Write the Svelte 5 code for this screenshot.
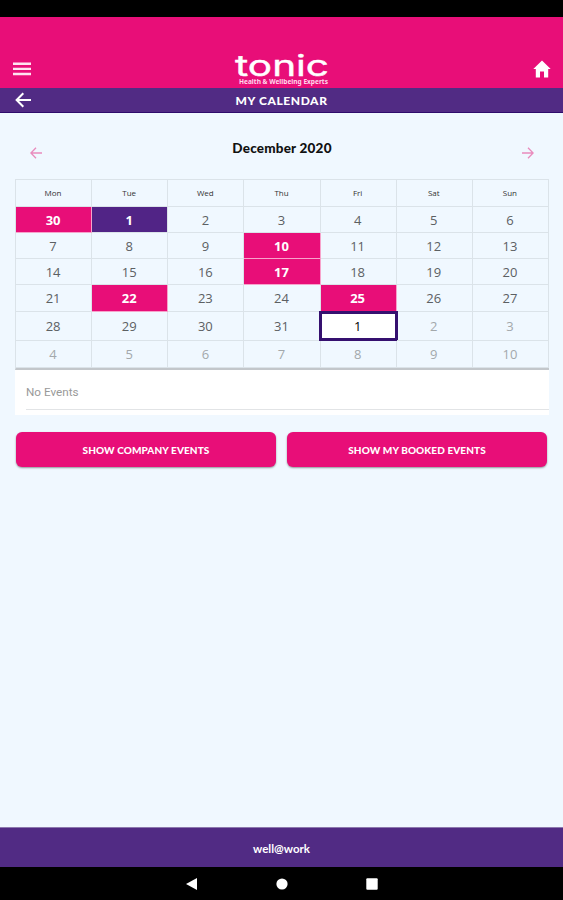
<script lang="ts">
  interface Day {
    label: number;
    type?: 'booked' | 'today' | 'selected' | 'outside';
  }

  const weekdays = ['Mon', 'Tue', 'Wed', 'Thu', 'Fri', 'Sat', 'Sun'];
  const booked = [10, 17, 22, 25];

  function buildDays(): Day[] {
    const days: Day[] = [{ label: 30, type: 'booked' }];
    for (let i = 1; i <= 31; i++) {
      days.push({ label: i, type: i === 1 ? 'today' : booked.includes(i) ? 'booked' : undefined });
    }
    for (let i = 1; i <= 10; i++) {
      days.push({ label: i, type: i === 1 ? 'selected' : 'outside' });
    }
    return days;
  }

  const days = buildDays();
</script>

<div class="app">
  <div class="status-bar"></div>

  <header>
    <button class="icon-btn menu" aria-label="Menu">
      <svg width="18" height="14" viewBox="0 0 18 14"><path d="M0 1.8h18M0 6.9h18M0 12h18" stroke="#ffe3f1" stroke-width="2.4" /></svg>
    </button>
    <svg class="logo" width="96" height="38" viewBox="0 0 96 38">
      <text class="word" x="1" y="26.5" textLength="94" lengthAdjust="spacingAndGlyphs">tonic</text>
      <text class="tagline" x="5" y="34.5" textLength="89" lengthAdjust="spacingAndGlyphs">Health &amp; Wellbeing Experts</text>
    </svg>
    <button class="icon-btn home" aria-label="Home">
      <svg width="18" height="18" viewBox="0 0 18 18"><path d="M9 0.5 0.3 9H2.8v8.5h4.2v-6h4v6h4.2V9h2.5z" fill="#fff" /></svg>
    </button>
  </header>

  <div class="title-bar">
    <button class="icon-btn back" aria-label="Back">
      <svg width="17" height="16" viewBox="0 0 17 16"><path d="M16 8H2M8.3 1.2 1.6 8l6.7 6.8" fill="none" stroke="#fff" stroke-width="2" /></svg>
    </button>
    <h1>MY CALENDAR</h1>
  </div>

  <main>
    <div class="month">
      <button class="icon-btn prev" aria-label="Previous month">
        <svg width="12" height="12" viewBox="0 0 12 12"><path d="M12 6H1M6 .8.9 6 6 11.2" /></svg>
      </button>
      <h2>December 2020</h2>
      <button class="icon-btn next" aria-label="Next month">
        <svg width="12" height="12" viewBox="0 0 12 12"><path d="M0 6h11M6 .8 11.1 6 6 11.2" /></svg>
      </button>
    </div>

    <div class="calendar">
      {#each weekdays as weekday}
        <div class="cell weekday">{weekday}</div>
      {/each}
      {#each days as day}
        <div class="cell {day.type ?? ''}">{day.label}</div>
      {/each}
    </div>

    <div class="events">
      <p>No Events</p>
    </div>

    <div class="actions">
      <button>SHOW COMPANY EVENTS</button>
      <button>SHOW MY BOOKED EVENTS</button>
    </div>
  </main>

  <footer><span>well@work</span></footer>

  <nav>
    <svg width="12" height="12" viewBox="0 0 12 12"><path d="M11 0v12L0 6z" fill="#fff" /></svg>
    <svg width="12" height="12" viewBox="0 0 12 12"><circle cx="6" cy="6" r="5.6" fill="#fff" /></svg>
    <svg width="12" height="12" viewBox="0 0 12 12"><rect x="0.3" y="0.3" width="11.4" height="11.4" rx="1" fill="#fff" /></svg>
  </nav>
</div>

<style>
  :global(body) {
    margin: 0;
    background: #f0f8ff;
  }

  .app {
    display: flex;
    flex-direction: column;
    height: 900px;
    background: #f0f8ff;
    font-family: 'Open Sans', 'Noto Sans', sans-serif;
  }

  .status-bar {
    height: 17px;
    background: #000;
  }

  .icon-btn {
    display: flex;
    padding: 0;
    border: none;
    background: none;
    cursor: pointer;
  }

  header {
    display: flex;
    justify-content: space-between;
    align-items: flex-end;
    box-sizing: border-box;
    height: 71px;
    padding: 0 12px 1px 13px;
    background: #e80e78;
  }

  .menu {
    padding-bottom: 11px;
  }

  .home {
    padding-bottom: 9px;
  }

  .logo .word {
    font-family: Inter, sans-serif;
    font-size: 29px;
    fill: #fff;
    stroke: #fff;
    stroke-width: 0.4px;
  }

  .logo .tagline {
    font-family: 'Noto Sans', sans-serif;
    font-size: 6.5px;
    font-weight: 700;
    fill: #ffd9ec;
  }

  .title-bar {
    display: grid;
    grid-template-columns: 1fr auto 1fr;
    align-items: center;
    box-sizing: border-box;
    height: 25px;
    padding: 0 15px;
    border-bottom: 1px solid #2f0c6c;
    background: #512b84;
  }

  h1 {
    margin: 0;
    font-family: Lato, sans-serif;
    font-size: 12px;
    font-weight: 900;
    letter-spacing: 0.6px;
    color: #fff;
  }

  main {
    flex: 1;
    padding: 0 14px 0 15px;
  }

  .month {
    display: flex;
    justify-content: space-between;
    box-sizing: border-box;
    height: 66px;
    padding: 25px 15px 0;
  }

  .month svg {
    margin-top: 9px;
    fill: none;
    stroke: #e98bbd;
    stroke-width: 1.3;
  }

  h2 {
    margin: 0;
    font-family: Lato, sans-serif;
    font-size: 13.5px;
    font-weight: 900;
    line-height: 20px;
    letter-spacing: 0.2px;
    color: #111;
  }

  .calendar {
    display: grid;
    grid-template-columns: repeat(7, 1fr);
    grid-template-rows: 27px 26px 26px 26px 27px 29px 27px;
    border-top: 1px solid #dbe3e9;
    border-left: 1px solid #dbe3e9;
    border-bottom: 2px solid #c3c7cb;
  }

  .cell {
    display: flex;
    justify-content: center;
    align-items: center;
    box-sizing: border-box;
    padding: 0 1px 0 0;
    border-right: 1px solid #dbe3e9;
    border-bottom: 1px solid #dbe3e9;
    font-size: 13px;
    line-height: 18px;
    color: #5c6063;
  }

  .weekday {
    font-size: 8px;
    color: #333;
  }

  .booked,
  .today {
    font-weight: 700;
    color: #fff;
  }

  .booked {
    border-color: #f7a3cb;
    background: #e80e78;
  }

  .today {
    background: #512486;
  }

  .selected {
    margin: -1px -1px 0 -2px;
    border: 3px solid #35106f;
    background: #fff;
    color: #000;
  }

  .outside {
    color: #a3a8ab;
  }

  .events {
    height: 45px;
    padding-left: 11px;
    background: #fff;
  }

  .events p {
    margin: 0;
    height: 39px;
    border-bottom: 1px solid #e2e4e6;
    font-family: Roboto, sans-serif;
    font-size: 11.7px;
    line-height: 45px;
    color: #999;
  }

  .actions {
    display: flex;
    gap: 11px;
    padding: 17px 2px 0 1px;
  }

  .actions button {
    flex: 1;
    height: 35px;
    padding: 0;
    border: none;
    border-radius: 6px;
    background: #e80e78;
    box-shadow: 0 1px 2px rgba(0, 0, 0, 0.4);
    font-family: Lato, sans-serif;
    font-size: 10px;
    font-weight: 900;
    letter-spacing: 0.1px;
    color: #fff;
  }

  footer {
    display: flex;
    justify-content: center;
    align-items: center;
    box-sizing: border-box;
    height: 40px;
    padding-top: 2px;
    border-top: 1px solid #8d79ae;
    background: #512b84;
    font-family: Lato, sans-serif;
    font-size: 11.5px;
    font-weight: 700;
    color: #fff;
  }

  nav {
    display: flex;
    justify-content: center;
    align-items: center;
    gap: 78px;
    height: 33px;
    background: #000;
  }
</style>
